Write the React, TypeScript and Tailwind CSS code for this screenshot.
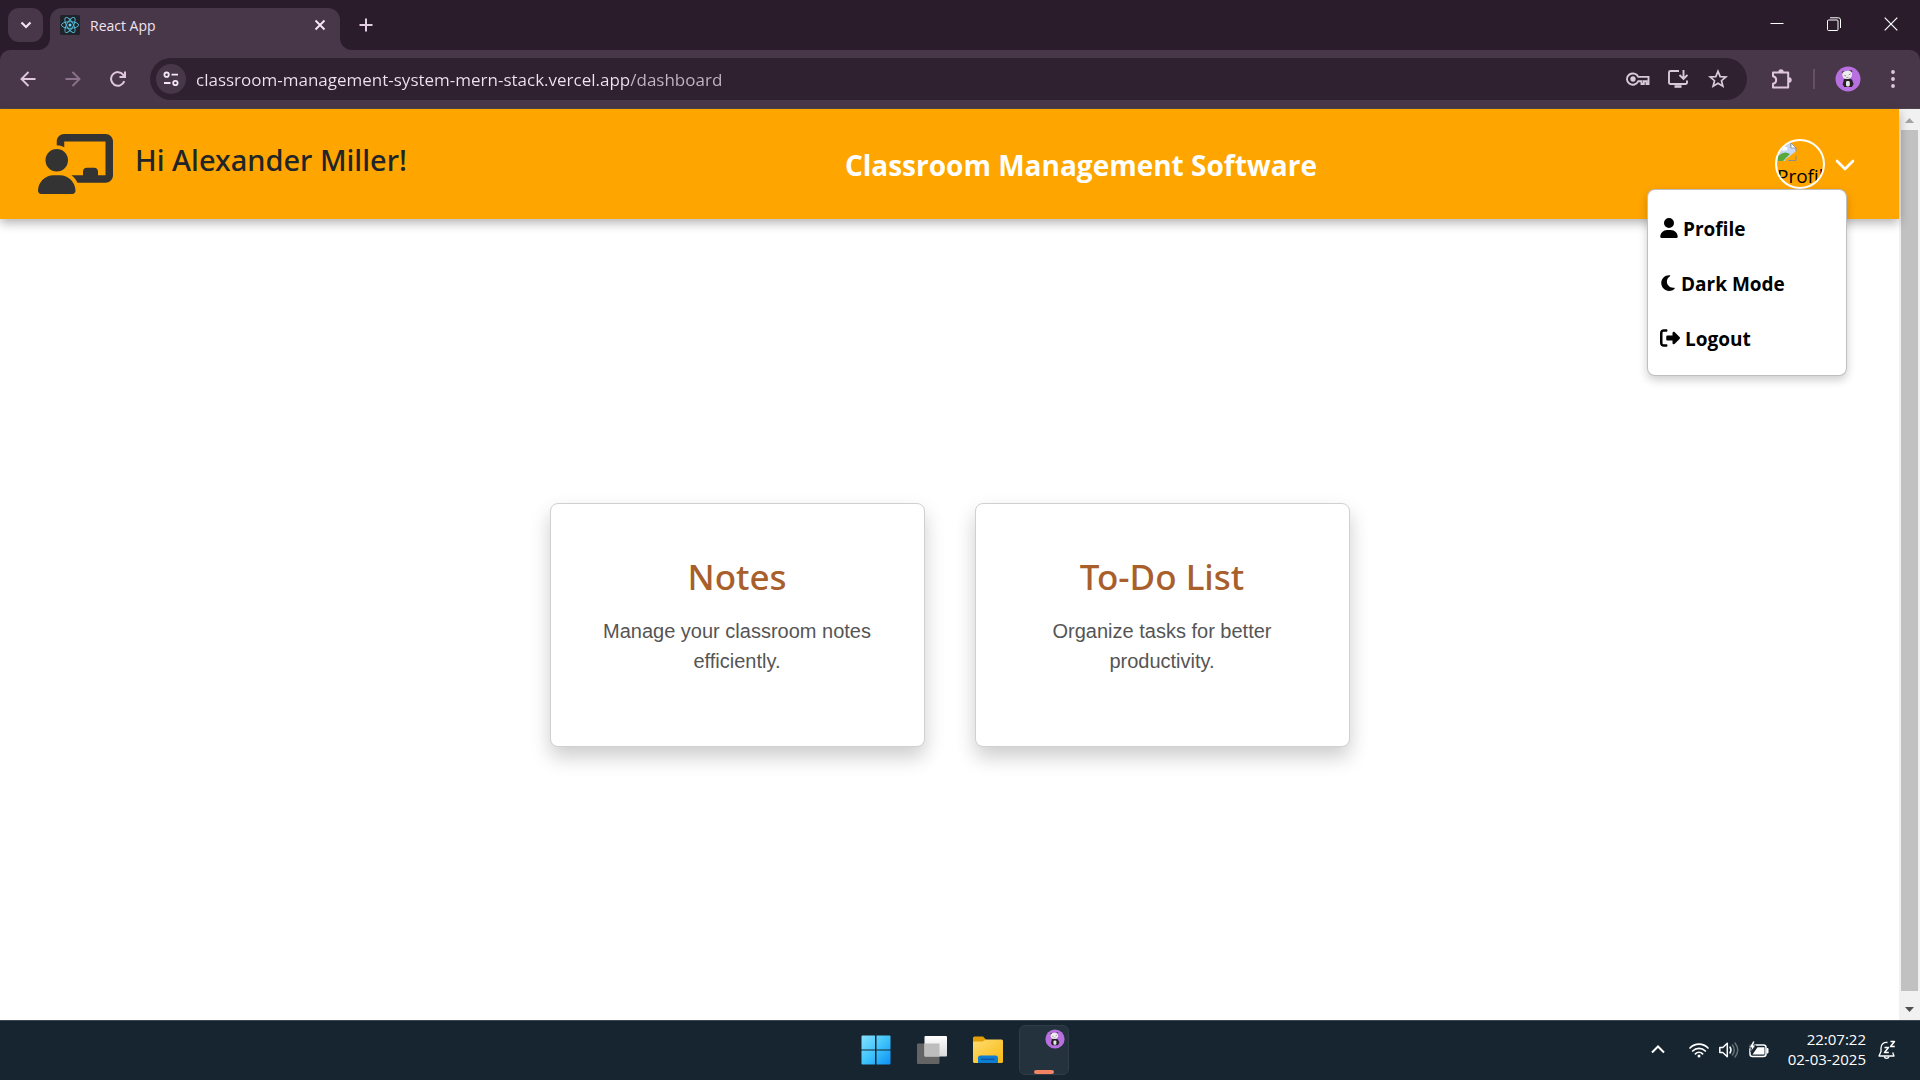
import React from "react";
import { FaChalkboardUser, FaUser, FaMoon, FaRightFromBracket } from "react-icons/fa6";

const UI = "font-['Open_Sans','Noto_Sans',sans-serif]";

function Panda({ className }: { className: string }) {
  return (
    <svg viewBox="0 0 26 26" className={className} aria-hidden="true">
      <circle cx="13" cy="13" r="12.5" fill="#b86fe0" />
      <circle cx="8.2" cy="6.2" r="1.300" fill="#444" />
      <circle cx="16" cy="5.200" r="1.200" fill="#444" />
      <path d="M9 13q4-1 8 .5l1.600 4.500-1.800 3h-7.600l-1.500-2.800z" fill="#262226" />
      <path d="M7.300 8.500q0-3.200 4.800-3.700 4.700-.3 5 3.200 0 4.500-4.700 5-5 .2-5.100-4.500z" fill="#ececec" />
      <path d="M9.300 9.300l1.800.7M13.800 8.800l1.800-.9" stroke="#777" strokeWidth="0.900" />
      <path d="M11.300 11.600l2.200-.3" stroke="#777" strokeWidth="0.700" />
      <rect x="11" y="15" width="3.800" height="5.500" rx="1.400" fill="#e6e6e6" />
    </svg>
  );
}

function ReactLogo() {
  return (
    <svg viewBox="0 0 20 20" className="size-5 shrink-0" aria-hidden="true">
      <rect width="20" height="20" rx="1.5" fill="#20232a" />
      <circle cx="10" cy="10" r="1.5" fill="#61dafb" />
      <g fill="none" stroke="#53bfdb" strokeWidth="0.9">
        <ellipse cx="10" cy="10" rx="8.6" ry="3.3" />
        <ellipse cx="10" cy="10" rx="8.6" ry="3.3" transform="rotate(60 10 10)" />
        <ellipse cx="10" cy="10" rx="8.6" ry="3.3" transform="rotate(120 10 10)" />
      </g>
    </svg>
  );
}

function TitleBar() {
  return (
    <div className="flex h-[50px] items-start bg-[#2b1c2c] pl-2">
      <button aria-label="Search tabs" className="mt-2 flex h-[34px] w-[35px] items-center justify-center rounded-[11px] bg-[#483748]">
        <svg viewBox="0 0 12 8" className="h-2 w-3" fill="none" stroke="#f0e3f0" strokeWidth="2.2">
          <path d="M1.5 1.5L6 6l4.500-4.500" />
        </svg>
      </button>
      <div className="relative mt-2 ml-[7px] flex h-[42px] w-[290px] items-center rounded-t-xl bg-[#483748] pr-2.5 pb-2 pl-2.5">
        <span className="absolute bottom-0 -left-3 size-3 rounded-br-xl shadow-[4px_4px_0_3px_#483748] [clip-path:inset(0)]" />
        <span className="absolute -right-3 bottom-0 size-3 rounded-bl-xl shadow-[-4px_4px_0_3px_#483748] [clip-path:inset(0)]" />
        <ReactLogo />
        <span className="ml-2.5 flex-1 text-[14px] text-[#f0e3f0]">React App</span>
        <button aria-label="Close tab" className="flex size-5 items-center justify-center">
          <svg viewBox="0 0 12 12" className="size-3" stroke="#f3e8f3" strokeWidth="1.900">
            <path d="M1.500 1.500l9 9M10.500 1.500l-9 9" />
          </svg>
        </button>
      </div>
      <button aria-label="New tab" className="mt-[15px] ml-4 flex size-5 items-center justify-center">
        <svg viewBox="0 0 14 14" className="size-3.5" stroke="#e2cde3" strokeWidth="2">
          <path d="M7 .5v13M.5 7h13" />
        </svg>
      </button>
      <div className="ml-auto flex h-12 pr-px">
        <button aria-label="Minimize" className="flex w-[57px] items-center justify-center">
          <svg viewBox="0 0 14 14" className="size-3.5" stroke="#fff">
            <path d="M.5 6.500h13" />
          </svg>
        </button>
        <button aria-label="Restore" className="flex w-[57px] items-center justify-center">
          <svg viewBox="0 0 14 14" className="size-3.5" stroke="#fff" fill="none">
            <rect x="0.500" y="3" width="10.500" height="10.500" rx="1" />
            <path d="M3 .8h8.500a2 2 0 0 1 2 2v8.200" />
          </svg>
        </button>
        <button aria-label="Close window" className="flex w-[57px] items-center justify-center">
          <svg viewBox="0 0 14 14" className="size-3.5" stroke="#fff" strokeWidth="1.200">
            <path d="M.7.7l12.600 12.600M13.300.7L.7 13.300" />
          </svg>
        </button>
      </div>
    </div>
  );
}

function Toolbar() {
  return (
    <div className="bg-[#2b1c2c]">
      <div className="flex h-[59px] items-center rounded-t-[10px] border-b border-[#504650] bg-[#483748] pr-[15px] pl-3.5">
        <div className="flex items-center gap-[17px]">
          <button aria-label="Back" className="flex size-7 items-center justify-center">
            <svg viewBox="0 0 16 16" className="size-4" fill="none" stroke="#dfc8df" strokeWidth="1.900">
              <path d="M15.500 8H2M8.500 1L1.500 8l7 7" />
            </svg>
          </button>
          <button aria-label="Forward" className="flex size-7 items-center justify-center">
            <svg viewBox="0 0 16 16" className="size-4" fill="none" stroke="#8b738c" strokeWidth="1.900">
              <path d="M.5 8H14M7.500 1l7 7-7 7" />
            </svg>
          </button>
          <button aria-label="Reload" className="flex size-7 items-center justify-center">
            <svg viewBox="0 0 16 16" className="size-4" fill="none" stroke="#dfc8df" strokeWidth="2">
              <path d="M14.300 10.200A6.800 6.800 0 1 1 13.300 3.800L14.600 5.600M15 .5V6H9.500" />
            </svg>
          </button>
        </div>
        <div className="ml-[18px] flex h-[42px] flex-1 items-center rounded-full bg-[#302131] pr-[17px] pl-1.5">
          <button aria-label="View site information" className="flex size-[30px] shrink-0 items-center justify-center rounded-full bg-[#483748]">
            <svg viewBox="0 0 16 16" className="size-4" fill="none" stroke="#f3e8f3" strokeWidth="1.800">
              <circle cx="3.600" cy="3.700" r="2.200" />
              <path d="M8.500 3.700H15M1 12H7.500" />
              <circle cx="12.400" cy="12" r="2.200" />
            </svg>
          </button>
          <input
            aria-label="Address"
            defaultValue="classroom-management-system-mern-stack.vercel.app/dashboard"
            className="ml-2.5 min-w-0 flex-1 bg-[linear-gradient(90deg,#efe4ef_434px,#c3b8c6_434px)] bg-clip-text pt-0.5 text-[17px] text-transparent outline-none"
          />
          <div className="flex items-center gap-4">
            <button aria-label="Passwords" className="flex size-6 items-center justify-center">
              <svg viewBox="0 0 24 14" className="h-3.5 w-6 shrink-0" fill="none" stroke="#d8cbd9" strokeWidth="1.900">
                <path d="M12.300 4.900H22.500V12H20.500V9.300H17.800V12H15.500V9.200H12.300A5.900 5.600 0 1 1 12.300 4.900Z" />
                <circle cx="7" cy="7" r="1.700" fill="#d8cbd9" stroke="#d8cbd9" />
              </svg>
            </button>
            <button aria-label="Install app" className="flex size-6 items-center justify-center">
              <svg viewBox="0 0 20 18" className="h-[18px] w-5" fill="none" stroke="#d8cbd9" strokeWidth="1.900">
                <path d="M11 1H2.500A1.500 1.500 0 0 0 1 2.500V12.500A1.500 1.500 0 0 0 2.500 14H17.500A1.500 1.500 0 0 0 19 12.500V10.500M15.500 0V8.500M11.500 5l4 4 4-4" />
                <path d="M6.500 16.500h7" strokeWidth="2.600" />
              </svg>
            </button>
            <button aria-label="Bookmark this tab" className="flex size-6 items-center justify-center">
              <svg viewBox="0 0 20 20" className="size-5" fill="none" stroke="#d8cbd9" strokeWidth="1.700">
                <path d="M10 2.300l2.200 5.300 5.700.4-4.400 3.700 1.400 5.600L10 14.300l-4.900 3 1.400-5.600L2.100 8l5.700-.4z" />
              </svg>
            </button>
          </div>
        </div>
        <button aria-label="Extensions" className="ml-[23px] flex size-6 items-center justify-center">
          <svg viewBox="0 0 22 22" className="size-[22px]" fill="none" stroke="#dfc8df" strokeWidth="2">
            <path d="M2 4.500H17.200V19.500H2V15.800A3.800 3.800 0 0 0 2 8.300Z" strokeLinejoin="round" />
            <path d="M7.300 4a2.700 2.700 0 0 1 5.400 0zM18 9.300a2.700 2.700 0 0 1 0 5.400z" fill="#dfc8df" stroke="none" />
          </svg>
        </button>
        <span className="ml-[19px] h-5 w-0.5 bg-[#655066]" />
        <button aria-label="Profile menu" className="ml-5">
          <Panda className="size-[26px]" />
        </button>
        <button aria-label="Browser menu" className="ml-5 flex size-6 items-center justify-center">
          <svg viewBox="0 0 6 20" className="h-5 w-1.5" fill="#dfc8df">
            <circle cx="3" cy="3" r="1.900" />
            <circle cx="3" cy="10" r="1.900" />
            <circle cx="3" cy="17" r="1.900" />
          </svg>
        </button>
      </div>
    </div>
  );
}

const menu = [
  { label: "Profile", icon: <FaUser className="mb-0.5 h-5 w-[18px]" /> },
  { label: "Dark Mode", icon: <FaMoon className="mb-0.5 h-[18px] w-4" /> },
  { label: "Logout", icon: <FaRightFromBracket className="mb-0.5 size-5" /> },
];

function AppHeader() {
  return (
    <header className="relative z-10 flex h-[110px] items-center justify-between bg-[#ffa500] pr-11 pl-[38px] shadow-[0_4px_10px_rgba(0,0,0,0.3)]">
      <div className="flex items-center gap-[22px]">
        <FaChalkboardUser className="h-[60px] w-[75px] text-[#333]" />
        <h2 className="pb-2 font-['Noto_Sans',sans-serif] text-[29px] leading-9 font-medium text-[#212529]">Hi Alexander Miller!</h2>
      </div>
      <h1 className="pt-0.5 pr-5 text-[28px] leading-9 font-bold text-white">Classroom Management Software</h1>
      <div className="relative">
        <button aria-expanded="true" aria-label="Account menu" className="flex items-center gap-2.5">
          <span className="relative size-[50px] overflow-hidden rounded-full border-2 border-white text-left text-black">
            <svg viewBox="0 0 20 20" className="mt-px size-5" aria-hidden="true">
              <path d="M1 1h13l5 5v4L8 19H1z" fill="#c5d8f7" />
              <path d="M1 18v-4q6-6 12-2l-7 7H1z" fill="#58a83c" />
              <path d="M0 .5h14v5h5v4M11 18.500h8v-5" fill="none" stroke="#8d8d8d" />
              <ellipse cx="7" cy="6.500" rx="3.500" ry="2" fill="#fff" />
              <path d="M14 1v5h5z" fill="#fff" stroke="#8d8d8d" strokeWidth="0.800" />
              <path d="M8.500 19L19.500 10.500" stroke="#ffa500" strokeWidth="2.400" />
            </svg>
            <span className="block text-[19px] leading-7">Profile</span>
          </span>
          <svg viewBox="0 0 20 12" className="mt-0.5 h-3 w-5" fill="none" stroke="#fff" strokeWidth="2.600" strokeLinecap="round" strokeLinejoin="round">
            <path d="M2 2l8 8 8-8" />
          </svg>
        </button>
        <ul className="absolute top-[50px] right-2 flex w-[200px] flex-col gap-[11px] rounded-lg border border-black/25 bg-white px-3 pt-[17px] pb-3.5 shadow-[0_4px_10px_rgba(0,0,0,0.2)]">
          {menu.map((item) => (
            <li key={item.label}>
              <button className="flex h-11 items-center gap-[5px] text-[19px] leading-6 font-bold text-black">
                {item.icon}
                <span>{item.label}</span>
              </button>
            </li>
          ))}
        </ul>
      </div>
    </header>
  );
}

const cards = [
  { title: "Notes", text: "Manage your classroom notes efficiently." },
  { title: "To-Do List", text: "Organize tasks for better productivity." },
];

function Dashboard() {
  return (
    <main className="flex flex-1 items-center justify-center gap-[50px] bg-white pt-2.5">
      {cards.map((card) => (
        <a
          key={card.title}
          href="#"
          className="flex h-[244px] w-[375px] flex-col items-center rounded-lg border border-[#d0d0d0] bg-white px-11 pt-[49px] text-center shadow-[0_10px_20px_rgba(0,0,0,0.2)]"
        >
          <h3 className="font-['Noto_Sans',sans-serif] text-[35px] leading-[48px] font-medium text-[#a85f2c]">{card.title}</h3>
          <p className="mt-[15px] font-['Liberation_Sans',Arial,sans-serif] text-[20px] leading-[30px] text-[#555]">{card.text}</p>
        </a>
      ))}
    </main>
  );
}

function Scrollbar() {
  return (
    <div className="flex w-[21px] flex-col items-center bg-[#f1f1f1]" aria-hidden="true">
      <svg viewBox="0 0 9 21" className="h-[21px] w-[9px]" fill="#a3a3a3">
        <path d="M0 14L4.500 9 9 14z" />
      </svg>
      <div className="w-[17px] flex-1 bg-[#c1c1c1]" />
      <svg viewBox="0 0 9 29" className="h-[29px] w-[9px]" fill="#505050">
        <path d="M0 16h9l-4.500 5z" />
      </svg>
    </div>
  );
}

function Taskbar() {
  return (
    <footer className="grid h-[60px] grid-cols-[1fr_auto_1fr] items-center border-t border-[#3b4751] bg-[#172530] pb-0.5">
      <span />
      <div className="flex gap-1.5">
        <button aria-label="Start" className="flex size-[50px] items-center justify-center">
          <svg viewBox="0 0 30 30" className="size-[30px]">
            <defs>
              <linearGradient id="win" x1="0" y1="0" x2="30" y2="30" gradientUnits="userSpaceOnUse">
                <stop offset="0" stopColor="#8ae2ff" />
                <stop offset="0.500" stopColor="#3fc4fb" />
                <stop offset="1" stopColor="#0b8ef5" />
              </linearGradient>
            </defs>
            <path fill="url(#win)" d="M1.500.5H14v14H.5v-13a1 1 0 0 1 1-1zM15.500.5h13a1 1 0 0 1 1 1v13h-14zM.5 15.500H14v14H1.500a1 1 0 0 1-1-1zM15.500 15.500h14v13a1 1 0 0 1-1 1h-13z" />
          </svg>
        </button>
        <button aria-label="Task view" className="flex size-[50px] items-center justify-center">
          <svg viewBox="0 0 30 28" className="h-7 w-[30px]">
            <defs>
              <linearGradient id="tv" x1="0" y1="0" x2="0" y2="1">
                <stop offset="0" stopColor="#fff" />
                <stop offset="1" stopColor="#d9d9d9" />
              </linearGradient>
            </defs>
            <rect y="7.500" width="22.500" height="20.500" rx="1" fill="#646464" />
            <rect x="7.500" width="22.500" height="20.500" rx="1" fill="url(#tv)" />
            <rect x="7.500" y="7.500" width="15" height="13" fill="#bdbdbd" />
          </svg>
        </button>
        <button aria-label="File Explorer" className="flex size-[50px] items-center justify-center">
          <svg viewBox="0 0 30 27" className="h-[27px] w-[30px]">
            <defs>
              <linearGradient id="fold" x1="0" y1="0" x2="1" y2="1">
                <stop offset="0" stopColor="#ffdc70" />
                <stop offset="1" stopColor="#f8b912" />
              </linearGradient>
            </defs>
            <path d="M0 2a1.500 1.500 0 0 1 1.500-1.500H10L13.500 4H29v8H0z" fill="#e1a005" />
            <path d="M0 6.500a1 1 0 0 1 1-1h8.500L13 3.500H28.500A1.500 1.500 0 0 1 30 5v20.500A1.500 1.500 0 0 1 28.500 27h-27A1.500 1.500 0 0 1 0 25.500z" fill="url(#fold)" />
            <path d="M5 27v-5a2.500 2.500 0 0 1 2.500-2.500h15A2.500 2.500 0 0 1 25 22v5z" fill="#0d7dd2" />
            <path d="M8 23.200h13.500" stroke="#0a4f94" strokeWidth="1.200" />
          </svg>
        </button>
        <button aria-label="Browser" className="flex size-[50px] flex-col items-center justify-between rounded-md border border-[#303d48] bg-[#24323d]">
          <Panda className="mt-[3px] mr-[3px] size-5 self-end" />
          <span className="h-1 w-5 rounded-full bg-[#f48264]" />
        </button>
      </div>
      <div className="flex items-center justify-end pr-6 text-white">
        <button aria-label="Show hidden icons" className="mr-6">
          <svg viewBox="0 0 14 9" className="h-[9px] w-3.5" fill="none" stroke="#fff" strokeWidth="2">
            <path d="M1 7.500l6-6 6 6" />
          </svg>
        </button>
        <button aria-label="Network, volume and battery" className="flex items-center">
          <svg viewBox="0 0 20 16" className="h-4 w-5" fill="none" stroke="#fff" strokeWidth="1.700" strokeLinecap="round">
            <path d="M1 6a12.500 12.500 0 0 1 18 0M3.700 9a8.700 8.700 0 0 1 12.600 0M6.400 11.800a5 5 0 0 1 7.200 0" />
            <circle cx="10" cy="14" r="1.500" fill="#fff" stroke="none" />
          </svg>
          <svg viewBox="0 0 20 18" className="ml-2.5 h-[18px] w-5" fill="none" stroke="#fff" strokeWidth="1.500" strokeLinejoin="round" strokeLinecap="round">
            <path d="M.8 6.500h3l4.500-4.300v13.600L3.800 11.500h-3zM11 6q2 3 0 6" />
            <path d="M13.500 4q3.500 5 0 10M16 2q5.500 7 0 14" stroke="#62707a" />
          </svg>
          <svg viewBox="0 0 20 18" className="ml-2.5 h-[18px] w-5" fill="none">
            <rect x="1" y="4" width="16" height="11.500" rx="2.500" stroke="#fff" strokeWidth="1.500" />
            <path d="M8.500 6.200h7v7.200H3.500z" fill="#fff" />
            <path d="M18 7.500h1v4.500h-1z" fill="#fff" stroke="#fff" />
            <path d="M4 0L0 6.800h2.500L1.800 11l5-6.800H4.500L6 0z" fill="#fff" stroke="#172530" strokeWidth="0.800" />
          </svg>
        </button>
        <time className="ml-[19px] pb-0.5 text-right text-[15px] leading-5">
          <span className="block">22:07:22</span>
          <span className="block">02-03-2025</span>
        </time>
        <button aria-label="Notifications" className="ml-3">
          <svg viewBox="0 0 18 20" className="h-5 w-[18px]" fill="none" stroke="#fff" strokeWidth="1.300" strokeLinejoin="round">
            <path d="M9.500 2.500C5.500 2 3 4.500 3 8v3.500L1 16h15l-1.300-3.500" />
            <path d="M6.200 16.500a2.500 2.500 0 0 0 4.800 0" />
            <path d="M6.500 7.500h4L6.500 12.500h4.300M12.500 1.500h4l-4 5h4.300" strokeWidth="1.500" />
          </svg>
        </button>
      </div>
    </footer>
  );
}

export default function App() {
  return (
    <div className={`flex min-h-screen flex-col ${UI}`}>
      <TitleBar />
      <Toolbar />
      <div className="flex flex-1">
        <div className="flex min-w-0 flex-1 flex-col">
          <AppHeader />
          <Dashboard />
        </div>
        <Scrollbar />
      </div>
      <Taskbar />
    </div>
  );
}
